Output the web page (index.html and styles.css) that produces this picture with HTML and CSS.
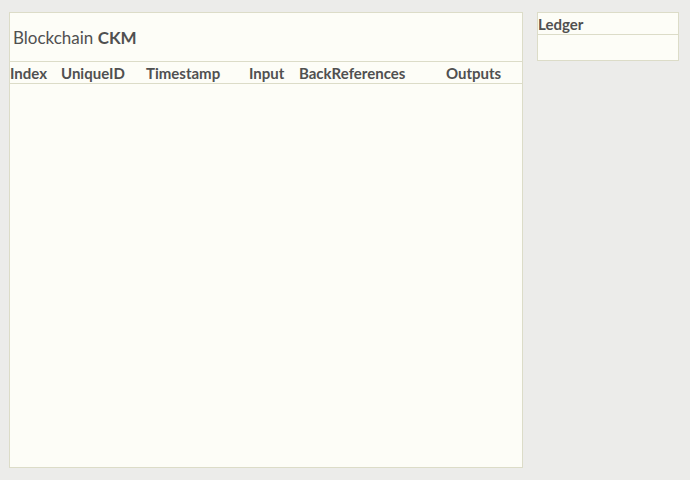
FILE: index.html
```html
<!DOCTYPE html>
<html>
<head>
<meta charset="utf-8">
<link rel="stylesheet" href="styles.css">
</head>
<body>
<div class="page">
  <div class="main">
    <div class="title">Blockchain <b>CKM</b></div>
    <div class="thead">
      <span class="c1">Index</span>
      <span class="c2">UniqueID</span>
      <span class="c3">Timestamp</span>
      <span class="c4">Input</span>
      <span class="c5">BackReferences</span>
      <span class="c6">Outputs</span>
    </div>
    <div class="tbody"></div>
  </div>
  <div class="ledger">
    <div class="ledger-head">Ledger</div>
    <div class="ledger-body"></div>
  </div>
</div>
</body>
</html>
```
FILE: styles.css
```css
html, body {
  margin: 0;
  padding: 0;
}
body {
  width: 690px;
  height: 480px;
  background: #ececea;
  font-family: Lato, "Open Sans", sans-serif;
  color: #505050;
  overflow: hidden;
}
.page {
  display: flex;
  align-items: flex-start;
  padding: 12px 0 0 9px;
  gap: 14px;
}
.main {
  width: 512px;
  height: 454px;
  border: 1px solid #dcdcc8;
  background: #fdfdf7;
  display: flex;
  flex-direction: column;
}
.title {
  height: 49px;
  box-sizing: border-box;
  padding: 14px 0 0 3px;
  font-size: 17px;
  border-bottom: 1px solid #dcdcc8;
}
.title b {
  font-weight: 700;
}
.thead {
  display: grid;
  grid-template-columns: 51px 85px 103px 50px 147px auto;
  height: 21px;
  line-height: 23px;
  font-weight: 700;
  font-size: 15px;
  border-bottom: 1px solid #dcdcc8;
}
.tbody {
  flex: 1;
}
.ledger {
  width: 140px;
  height: 47px;
  border: 1px solid #dcdcc8;
  background: #fdfdf7;
}
.ledger-head {
  height: 21px;
  font-weight: 700;
  font-size: 15px;
  line-height: 22px;
  border-bottom: 1px solid #dcdcc8;
}
```
